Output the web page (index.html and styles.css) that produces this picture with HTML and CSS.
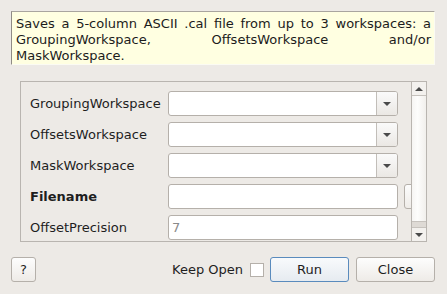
FILE: index.html
```html
<!DOCTYPE html>
<html lang="en">
<head>
  <meta charset="UTF-8">
  <title>SaveCalFile</title>
  <link rel="stylesheet" href="styles.css">
</head>
<body>
  <div class="dialog">
    <div class="desc">
      <span class="desc-line">Saves a 5-column ASCII .cal file from up to 3 workspaces: a</span>
      <span class="desc-line">GroupingWorkspace, OffsetsWorkspace and/or</span>
      <span class="desc-last">MaskWorkspace.</span>
    </div>

    <div class="panel">
      <div class="props">
        <div class="row">
          <span class="label">GroupingWorkspace</span>
          <div class="combo"><span class="combo-text"></span><span class="combo-btn"><span class="tri-down"></span></span></div>
        </div>
        <div class="row">
          <span class="label">OffsetsWorkspace</span>
          <div class="combo"><span class="combo-text"></span><span class="combo-btn"><span class="tri-down"></span></span></div>
        </div>
        <div class="row">
          <span class="label">MaskWorkspace</span>
          <div class="combo"><span class="combo-text"></span><span class="combo-btn"><span class="tri-down"></span></span></div>
        </div>
        <div class="row">
          <span class="label label-bold">Filename</span>
          <div class="field"></div>
          <div class="browse"></div>
        </div>
        <div class="row">
          <span class="label">OffsetPrecision</span>
          <div class="field field-hint">7</div>
        </div>
      </div>
      <div class="vscroll">
        <div class="sb-btn sb-up"><span class="tri-up"></span></div>
        <div class="sb-handle"></div>
        <div class="sb-groove"></div>
        <div class="sb-btn sb-down"><span class="tri-down"></span></div>
      </div>
    </div>

    <div class="footer">
      <button class="btn btn-help">?</button>
      <div class="spacer"></div>
      <label class="keep">Keep Open <span class="check"></span></label>
      <button class="btn btn-default">Run</button>
      <button class="btn">Close</button>
    </div>
  </div>
</body>
</html>
```

FILE: styles.css
```css
body {
  margin: 0;
  background-color: #edeae6;
  font-family: "DejaVu Sans", "Liberation Sans", sans-serif;
  font-size: 13px;
  color: #222;
  width: 447px;
  height: 294px;
  overflow: hidden;
}
.dialog {
  display: flex;
  flex-direction: column;
}
.desc {
  margin: 11px 12px 0 11px;
  height: 54px;
  box-sizing: border-box;
  padding: 4px 3px 0 4px;
  background-color: #ffffe1;
  border-top: 1px solid #a9a59f;
  border-left: 1px solid #8f8b86;
  border-right: 1px solid #fbfbf3;
  border-bottom: 1px solid #fbfbf3;
  line-height: 16px;
  color: #1c1c1c;
}
.desc-line {
  display: block;
  text-align: justify;
  text-align-last: justify;
}
.desc-last {
  display: block;
}
.panel {
  margin: 16px 20px 0 20px;
  height: 161px;
  box-sizing: border-box;
  border: 1px solid #b9b5b0;
  display: flex;
}
.props {
  flex: 1;
  overflow: hidden;
  padding: 9px 0 0 9px;
  display: flex;
  flex-direction: column;
  gap: 6px;
}
.row {
  display: flex;
  align-items: center;
  height: 25px;
  flex: none;
}
.label {
  width: 138px;
  flex: none;
  white-space: nowrap;
  color: #1e1e1e;
}
.label-bold {
  font-weight: bold;
}
.combo, .field {
  width: 230px;
  height: 25px;
  flex: none;
  box-sizing: border-box;
  background-color: #fff;
  border: 1px solid #b5b0aa;
  border-radius: 3px;
}
.combo {
  display: flex;
}
.combo-text {
  flex: 1;
}
.combo-btn {
  width: 20px;
  border-left: 1px solid #c2beb9;
  background: linear-gradient(#fafafa, #ebe8e4);
  border-radius: 0 2px 2px 0;
  display: flex;
  align-items: center;
  justify-content: center;
}
.tri-down {
  width: 0;
  height: 0;
  border-left: 4px solid transparent;
  border-right: 4px solid transparent;
  border-top: 4px solid #4a4a4a;
}
.tri-up {
  width: 0;
  height: 0;
  border-left: 4px solid transparent;
  border-right: 4px solid transparent;
  border-bottom: 4px solid #4a4a4a;
}
.field-hint {
  color: #8a8a8a;
  padding-left: 3px;
  line-height: 23px;
}
.browse {
  margin-left: 6px;
  width: 60px;
  height: 25px;
  flex: none;
  box-sizing: border-box;
  border: 1px solid #b5b0aa;
  border-radius: 3px;
  background: linear-gradient(#fcfcfc, #efece8);
}
.vscroll {
  width: 14px;
  flex: none;
  border-left: 1px solid #b9b5b0;
  display: flex;
  flex-direction: column;
  background-color: #edeae6;
}
.sb-btn {
  height: 13px;
  flex: none;
  display: flex;
  align-items: center;
  justify-content: center;
  background-color: #f3f1ee;
}
.sb-up {
  border-bottom: 1px solid #c6c2bd;
}
.sb-down {
  border-top: 1px solid #c6c2bd;
}
.sb-handle {
  flex: 1;
  background: linear-gradient(to right, #f6f5f3, #fdfdfc 40%, #f1efec);
  border-bottom: 1px solid #c6c2bd;
}
.sb-groove {
  height: 5px;
  flex: none;
  background-color: #dedad5;
}
.footer {
  margin-top: 15px;
  padding: 0 12px 0 11px;
  display: flex;
  align-items: center;
  height: 25px;
}
.spacer {
  flex: 1;
}
.btn {
  font-family: inherit;
  font-size: 13px;
  color: #1e1e1e;
  height: 25px;
  width: 79px;
  box-sizing: border-box;
  border: 1px solid #b5b0aa;
  border-radius: 3px;
  background: linear-gradient(#fdfdfd, #eeebe7);
  padding: 0;
  margin-left: 7px;
}
.btn-help {
  width: 25px;
  margin-left: 0;
}
.btn-default {
  border-color: #5a8bbd;
  background: linear-gradient(#f8fafc, #e6ebf0);
  margin-left: 6px;
}
.keep {
  display: flex;
  align-items: center;
  gap: 7px;
  color: #1e1e1e;
}
.check {
  width: 14px;
  height: 14px;
  box-sizing: border-box;
  border: 1px solid #b5b0aa;
  background-color: #fff;
}
```
